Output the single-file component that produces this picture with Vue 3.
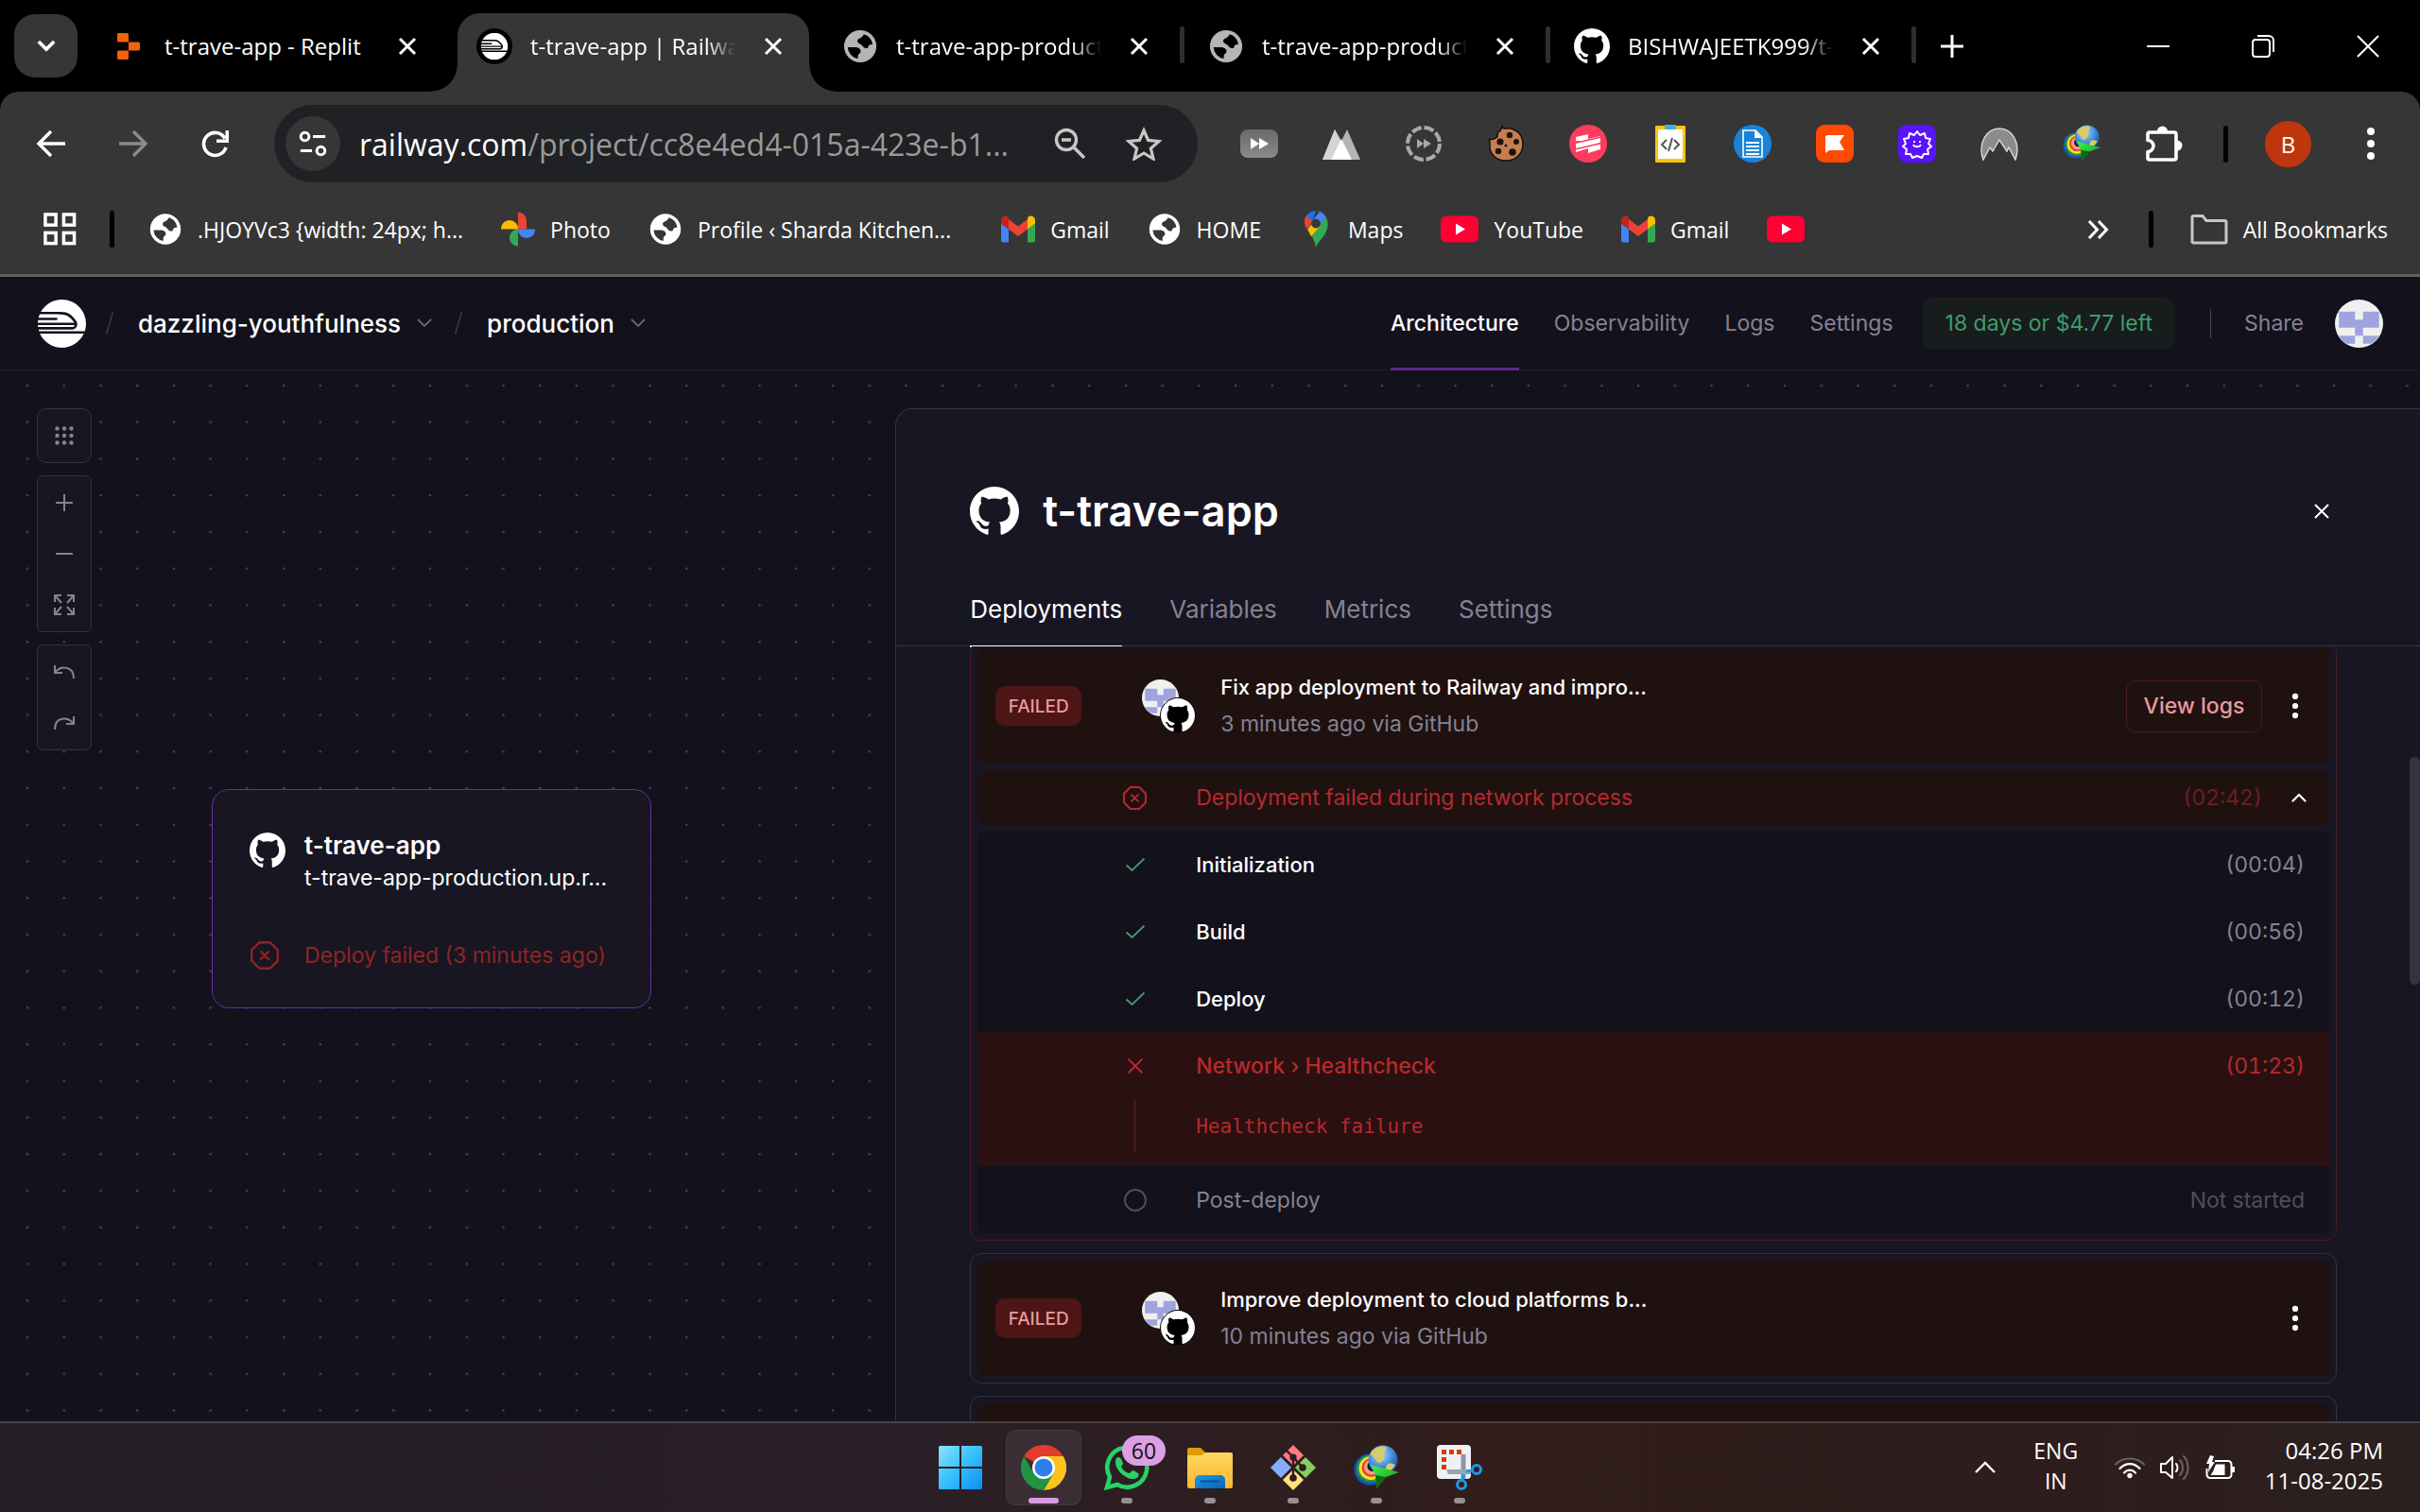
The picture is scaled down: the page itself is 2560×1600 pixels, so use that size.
<script setup>
const tabs = [
  { title: 't-trave-app - Replit', icon: 'replit' },
  { title: 't-trave-app | Railway', icon: 'railway-fav', active: true, fade: true },
  { title: 't-trave-app-product', icon: 'globe', dim: true, divider: true, fade: true },
  { title: 't-trave-app-product', icon: 'globe', dim: true, divider: true, fade: true },
  { title: 'BISHWAJEETK999/t-', icon: 'github', divider: true, fade: true },
]

const extensions = ['ext-speed', 'ext-peak', 'ext-skip', 'ext-cookie', 'ext-stripes', 'ext-code', 'ext-doc', 'ext-flag', 'ext-gear', 'ext-mountain', 'idm', 'puzzle']

const bookmarks = [
  { label: '.HJOYVc3 {width: 24px; h...', icon: 'globe' },
  { label: 'Photo', icon: 'photos' },
  { label: 'Profile ‹ Sharda Kitchen...', icon: 'globe', wide: true },
  { label: 'Gmail', icon: 'gmail' },
  { label: 'HOME', icon: 'globe' },
  { label: 'Maps', icon: 'maps' },
  { label: 'YouTube', icon: 'youtube' },
  { label: 'Gmail', icon: 'gmail' },
  { label: '', icon: 'youtube' },
]

const navLinks = ['Architecture', 'Observability', 'Logs', 'Settings']
const panelTabs = ['Deployments', 'Variables', 'Metrics', 'Settings']

const steps = [
  { name: 'Initialization', time: '(00:04)', state: 'done', icon: 'check' },
  { name: 'Build', time: '(00:56)', state: 'done', icon: 'check' },
  { name: 'Deploy', time: '(00:12)', state: 'done', icon: 'check' },
  { name: 'Network › Healthcheck', time: '(01:23)', state: 'failed', icon: 'cross', detail: 'Healthcheck failure' },
  { name: 'Post-deploy', time: 'Not started', state: 'pending', icon: 'ring' },
]

const apps = [
  { name: 'Start', icon: 'windows' },
  { name: 'Chrome', icon: 'chrome', active: true },
  { name: 'WhatsApp', icon: 'whatsapp', badge: '60', running: true },
  { name: 'File Explorer', icon: 'explorer', running: true },
  { name: 'Git', icon: 'git', running: true },
  { name: 'Download Manager', icon: 'idm', running: true },
  { name: 'Snipping Tool', icon: 'snip', running: true },
]
</script>

<template>
  <div class="screen">
    <svg class="sprite" aria-hidden="true">
      <defs>
        <linearGradient id="g-win" x1="0" y1="0" x2="1" y2="1"><stop offset="0" stop-color="#8fe3ff" /><stop offset=".45" stop-color="#3cc4fb" /><stop offset="1" stop-color="#0a8df5" /></linearGradient>
        <linearGradient id="g-folder" x1="0" y1="0" x2="0" y2="1"><stop offset="0" stop-color="#ffd75e" /><stop offset="1" stop-color="#fbb72c" /></linearGradient>
        <linearGradient id="g-blue" x1="0" y1="0" x2="1" y2="1"><stop offset="0" stop-color="#1f9ae5" /><stop offset="1" stop-color="#0663b5" /></linearGradient>
        <linearGradient id="g-grey" x1="0" y1="0" x2="0" y2="1"><stop offset="0" stop-color="#6a6a6a" /><stop offset="1" stop-color="#8a8a8a" /></linearGradient>
        <radialGradient id="g-earth" cx=".4" cy=".3" r=".8"><stop offset="0" stop-color="#b9e0fb" /><stop offset=".5" stop-color="#4690e0" /><stop offset="1" stop-color="#123a86" /></radialGradient>
        <linearGradient id="g-arrow" x1="0" y1="0" x2="1" y2="1"><stop offset="0" stop-color="#43ee48" /><stop offset="1" stop-color="#0f9a18" /></linearGradient>
      </defs>

      <symbol id="github" viewBox="0 0 16 16"><path fill="currentColor" d="M8 0C3.58 0 0 3.58 0 8c0 3.54 2.29 6.53 5.47 7.59.4.07.55-.17.55-.38 0-.19-.01-.82-.01-1.49-2.01.37-2.53-.49-2.69-.94-.09-.23-.48-.94-.82-1.13-.28-.15-.68-.52-.01-.53.63-.01 1.08.58 1.23.82.72 1.21 1.87.87 2.33.66.07-.52.28-.87.51-1.07-1.78-.2-3.64-.89-3.64-3.95 0-.87.31-1.59.82-2.15-.08-.2-.36-1.02.08-2.12 0 0 .67-.21 2.2.82.64-.18 1.32-.27 2-.27.68 0 1.36.09 2 .27 1.53-1.04 2.2-.82 2.2-.82.44 1.1.16 1.92.08 2.12.51.56.82 1.27.82 2.15 0 3.07-1.87 3.75-3.65 3.95.29.25.54.73.54 1.48 0 1.07-.01 1.93-.01 2.2 0 .21.15.46.55.38A8.013 8.013 0 0 0 16 8c0-4.42-3.58-8-8-8z" /></symbol>
      <symbol id="railway" viewBox="0 0 24 24"><path fill="currentColor" d="M.113 10.27A13.026 13.026 0 000 11.48h18.23c-.064-.125-.15-.237-.235-.347-3.117-4.027-4.793-3.677-7.19-3.78-.8-.034-1.34-.048-4.524-.048-1.704 0-3.555.005-5.358.01-.234.63-.459 1.24-.567 1.737h9.342v1.216H.113v.002zm18.26 2.426H.009c.02.326.05.645.094.961h16.955c.754 0 1.179-.429 1.315-.96zm-17.318 4.28s2.81 6.902 10.93 7.024c4.855 0 9.027-2.883 10.92-7.024H1.056zM11.988 0C7.5 0 3.593 2.466 1.531 6.108l4.75-.005v-.002c3.71 0 3.849.016 4.573.047l.448.016c1.563.052 3.485.22 4.996 1.364.82.621 2.007 1.99 2.712 2.965.654.902.842 1.94.396 2.934-.408.914-1.289 1.458-2.353 1.458H.391s.099.42.249.886h22.748A12.026 12.026 0 0024 12.005C24 5.377 18.621 0 11.988 0z" /></symbol>
      <symbol id="railway-fav" viewBox="0 0 40 40"><circle cx="20" cy="20" r="20" fill="#000" /><use href="#railway" x="5" y="5" width="30" height="30" color="#fff" /></symbol>
      <symbol id="identicon" viewBox="0 0 60 60"><circle cx="30" cy="30" r="30" fill="#f0f0f0" /><path fill="#9fa4de" d="M5 15h20v10h10V15h20v20H35v10h20c-3 5-6 8-10 10H35V45H25v10H15C11 53 8 50 5 45h20V35H5z" /></symbol>
      <symbol id="globe" viewBox="0 0 40 40"><path fill="currentColor" fill-rule="evenodd" d="M20 2a18 18 0 1 0 0 36 18 18 0 0 0 0-36zM24 6.500a14 14 0 0 1 9.800 11.500c-3.800-.3-5 1-5.200 4-2.600.6-4.600 0-6.200-2.400-2-2.800-5.600-2.400-5.600-5.600 0-3.400 4.800-2 7.200-7.500zM6 21h8c4 0 6.500 1.800 6.500 4.500 0 2.500-3 2.500-3 5.500v2.800A14 14 0 0 1 6 21z" /></symbol>
      <symbol id="replit" viewBox="0 0 24 28"><path fill="#f26207" d="M0 1.500A1.500 1.500 0 0 1 1.500 0h9A1.500 1.500 0 0 1 12 1.500v8H1.500A1.500 1.500 0 0 1 0 8zM12 9.500h10.500A1.500 1.500 0 0 1 24 11v6a1.500 1.500 0 0 1-1.500 1.500H12zM0 20a1.500 1.500 0 0 1 1.500-1.500H12v8a1.500 1.500 0 0 1-1.500 1.500h-9A1.500 1.500 0 0 1 0 26.500z" /></symbol>

      <symbol id="x" viewBox="0 0 20 20"><path d="M2 2l16 16M18 2L2 18" stroke="currentColor" stroke-width="3" fill="none" /></symbol>
      <symbol id="x-thin" viewBox="0 0 24 24"><path d="M1 1l22 22M23 1L1 23" stroke="currentColor" stroke-width="2" fill="none" /></symbol>
      <symbol id="x-panel" viewBox="0 0 16 16"><path d="M1 1l14 14M15 1L1 15" stroke="currentColor" stroke-width="2" fill="none" /></symbol>
      <symbol id="restore" viewBox="0 0 24 24"><g fill="none" stroke="currentColor" stroke-width="2"><rect x="1" y="5" width="18" height="18" rx="3" /><path d="M6 1h12a5 5 0 0 1 5 5v12" /></g></symbol>
      <symbol id="minus" viewBox="0 0 24 24"><path d="M0 12h24" stroke="currentColor" stroke-width="2" /></symbol>
      <symbol id="plus" viewBox="0 0 26 26"><path d="M13 1v24M1 13h24" stroke="currentColor" stroke-width="3" /></symbol>
      <symbol id="down" viewBox="0 0 22 14"><path d="M2 2l9 9 9-9" stroke="currentColor" stroke-width="4" fill="none" /></symbol>
      <symbol id="arrow-left" viewBox="0 0 32 30"><path d="M31 15H3M16 2L3 15l13 13" stroke="currentColor" stroke-width="3.400" fill="none" /></symbol>
      <symbol id="arrow-right" viewBox="0 0 32 30"><path d="M1 15h28M16 2l13 13-13 13" stroke="currentColor" stroke-width="3.400" fill="none" /></symbol>
      <symbol id="reload" viewBox="0 0 32 32"><path d="M27 20a12 12 0 1 1-1-9.500" stroke="currentColor" stroke-width="3.600" fill="none" /><path d="M30 2v13H17v-3.500h9.500V2z" fill="currentColor" /></symbol>
      <symbol id="tune" viewBox="0 0 32 32"><g fill="none" stroke="currentColor" stroke-width="3.200"><circle cx="7" cy="8" r="4.600" /><path d="M16 8h14M2 24h13" /><circle cx="25" cy="24" r="4.600" /></g></symbol>
      <symbol id="zoom-out" viewBox="0 0 34 34"><g fill="none" stroke="currentColor" stroke-width="3.400"><circle cx="13" cy="13" r="10.500" /><path d="M20.500 20.500L32 32M8 13h10" /></g></symbol>
      <symbol id="star" viewBox="0 0 38 36"><path d="M19 4l4.600 10.400L35 15.500l-8.600 7.500L29 34l-10-6-10 6 2.600-11L3 15.500l11.400-1.100z" fill="none" stroke="currentColor" stroke-width="3.200" /></symbol>
      <symbol id="dots-v" viewBox="0 0 10 36"><g fill="currentColor"><circle cx="5" cy="5" r="4" /><circle cx="5" cy="18" r="4" /><circle cx="5" cy="31" r="4" /></g></symbol>

      <symbol id="ext-speed" viewBox="0 0 40 40"><rect x="0" y="5" width="40" height="30" rx="8" fill="url(#g-grey)" /><path d="M11 14l9 6-9 6zM20 14l10 6-10 6z" fill="#fff" /></symbol>
      <symbol id="ext-peak" viewBox="0 0 40 40"><path d="M0 37L13 5l7 12 6-12 14 32z" fill="#b5b5b5" /><path d="M0 37L13 5l6 12-9 20z" fill="#d4d4d4" /><path d="M9 37l11-22 11 22z" fill="#fff" /></symbol>
      <symbol id="ext-skip" viewBox="0 0 40 40"><circle cx="20" cy="20" r="17" fill="none" stroke="#a9a9a9" stroke-width="4" stroke-dasharray="10.500 2.850" /><path d="M13 15l7 5-7 5zM20 15l8 5-8 5z" fill="#a9a9a9" /></symbol>
      <symbol id="ext-cookie" viewBox="0 0 40 40"><path d="M16 2c1 4 5 1 9 2 8 2 13 8 13 17 0 10-8 17-18 17C10 38 2 31 3 21c0-3 0-5-1-6 3 1 5 1 7-1 4-1 1-4 3-6 3-1 3-4 4-6z" fill="#c47e50" stroke="#17110d" stroke-width="1.600" /><g fill="#1c130e"><circle cx="24" cy="11" r="3.200" /><circle cx="14" cy="18" r="3.600" /><circle cx="31" cy="18" r="3" /><circle cx="27" cy="29" r="3.800" /><circle cx="12" cy="28" r="3.200" /><circle cx="20" cy="22" r="1.500" /></g></symbol>
      <symbol id="ext-stripes" viewBox="0 0 40 40"><circle cx="20" cy="20" r="20" fill="#ff3b5f" /><path d="M7 13l13-3v5l13-3v6L7 24v-5l6-2H7zM7 20l26-6v5l-6 2h6v5l-13 4v-5L7 29z" fill="#fff" /><path d="M6 19.500l28-6.500M6 26l28-6.500" stroke="#ff3b5f" stroke-width="1.600" /></symbol>
      <symbol id="ext-code" viewBox="0 0 40 40"><rect x="4" y="1" width="32" height="39" rx="1" fill="#fbc60a" /><rect x="7" y="5" width="26" height="31" fill="#fff" /><rect x="14" y="0" width="12" height="5" fill="#3bb1e8" /><path d="M16 16l-5 5 5 5M24 16l5 5-5 5M22 14l-4 14" stroke="#555" stroke-width="2" fill="none" /></symbol>
      <symbol id="ext-doc" viewBox="0 0 40 40"><circle cx="20" cy="20" r="20" fill="#1a83d8" /><path d="M10 6h13l7 7v21H10z" fill="#1a83d8" stroke="#fff" stroke-width="1.600" /><path d="M22 6v8h8zM13 18h14v2H13zM13 22h14v2H13zM13 26h14v2H13zM13 30h14v2H13z" fill="#fff" /></symbol>
      <symbol id="ext-flag" viewBox="0 0 40 40"><rect width="40" height="40" rx="9" fill="#ff4a00" /><path d="M12 11h18l-5 7 5 9H14l-4 3V13a2 2 0 0 1 2-2z" fill="#fff" /></symbol>
      <symbol id="ext-gear" viewBox="0 0 40 40"><rect width="40" height="40" rx="9" fill="#5a12ff" /><path d="M20 7l3 4 5-2 1 5 5 1-2 5 3 3-4 3 1 5-5 0-2 4-5-2-5 2-2-4-5 0 1-5-4-3 3-3-2-5 5-1 1-5 5 2z" fill="none" stroke="#fff" stroke-width="2" stroke-linejoin="round" /><path d="M17 17v2M23 17v2M16 21c1 3 7 3 8 0" stroke="#fff" stroke-width="1.800" fill="none" /></symbol>
      <symbol id="ext-mountain" viewBox="0 0 40 40"><path d="M3 37C-3 20 6 4 20 4s23 16 17 33l-7-13-2 4-8-12-7 12-3-4z" fill="#8b8b8b" stroke="#d8d8d8" stroke-width="1.400" /></symbol>
      <symbol id="puzzle" viewBox="0 0 40 40"><path d="M5 8h26a2 2 0 0 1 2 2v25a2 2 0 0 1-2 2H5a2 2 0 0 1-2-2v-6.500a6 6 0 0 0 0-12V10a2 2 0 0 1 2-2z" fill="none" stroke="#fff" stroke-width="3.600" stroke-linejoin="round" /><path d="M13 7a5.500 5.500 0 0 1 11 0zM34 16.500a5.500 5.500 0 0 1 0 11z" fill="#fff" /></symbol>
      <symbol id="idm" viewBox="0 0 48 48"><circle cx="17" cy="26" r="16.500" fill="#1a4fc4" /><circle cx="17.500" cy="25" r="14.500" fill="#1f9a34" /><circle cx="18" cy="24.500" r="12.500" fill="#f7e22c" /><circle cx="18.500" cy="24" r="10" fill="#e8432d" /><circle cx="19" cy="23.500" r="8" fill="#f7a08e" /><circle cx="20" cy="22.500" r="5.500" fill="#1d1216" /><circle cx="31" cy="16" r="15.500" fill="url(#g-earth)" /><path d="M19 7c4-5 10-6 15-5 2 3-2 5-2 8 2 4-1 8-5 9-3 0-3-4-6-6-2-2-4-3-2-6zM36 20c3-1 6 0 8 1-2 4-5 7-9 9-1-4-2-7 1-10z" fill="#d6cc6c" /><path d="M18 21l30 8-14 5-10 12-1-14z" fill="url(#g-arrow)" /><path d="M23 32l11 2-10 12z" fill="#0a6b12" /></symbol>

      <symbol id="apps" viewBox="0 0 36 36"><g fill="none" stroke="currentColor" stroke-width="3.600"><rect x="2" y="2" width="11.500" height="11.500" /><rect x="22" y="2" width="11.500" height="11.500" /><rect x="2" y="22" width="11.500" height="11.500" /><rect x="22" y="22" width="11.500" height="11.500" /></g></symbol>
      <symbol id="photos" viewBox="0 0 36 36"><path fill="#ea4335" d="M18 0a9 9 0 0 1 9 9.500V18h-9z" /><path fill="#4285f4" d="M36 18a9 9 0 0 1-9 9.500h0A9 9 0 0 1 18 18z" /><path fill="#34a853" d="M18 36a9 9 0 0 1-9-9.500A9 9 0 0 1 18 18z" /><path fill="#fbbc04" d="M0 18a9 9 0 0 1 9-9.500A9 9 0 0 1 18 18z" /></symbol>
      <symbol id="gmail" viewBox="0 0 36 28"><path fill="#4285f4" d="M2.500 28H8V14L0 8v17.500A2.500 2.500 0 0 0 2.500 28z" /><path fill="#34a853" d="M28 28h5.500a2.500 2.500 0 0 0 2.500-2.500V8l-8 6z" /><path fill="#fbbc04" d="M28 3.500V14l8-6V4.500C36 .6 31.600-1.200 28.600 1z" /><path fill="#ea4335" d="M8 14V3.500l10 7.500 10-7.500V14l-10 7.500z" /><path fill="#c5221f" d="M0 4.500V8l8 6V3.500L7.400 1C4.400-1.200 0 .6 0 4.500z" /></symbol>
      <symbol id="maps" viewBox="0 0 28 40"><path fill="#34a853" d="M14 40c2-8 13-13 13-26 0-3-1-5-2-7L9 26c2 4 4 8 5 14z" /><path fill="#fbbc04" d="M5 20l7-9 7 5-10 12c-1-2-3-5-4-8z" /><path fill="#ea4335" d="M4 5l7 6-7 9C2 16 0 10 4 5z" /><path fill="#1a73e8" d="M4 5C7 1 12 0 14 0l-4 12z" /><path fill="#4285f4" d="M14 0c5 0 9 3 11 7l-8 10-7-6L18 1z" /><circle cx="14" cy="14" r="5" fill="#363636" /></symbol>
      <symbol id="youtube" viewBox="0 0 40 28"><rect width="40" height="28" rx="6" fill="#ff0033" /><path d="M16 8l10 6-10 6z" fill="#fff" /></symbol>
      <symbol id="more" viewBox="0 0 24 20"><path d="M2 1l8.500 9L2 19M12 1l8.500 9-8.500 9" fill="none" stroke="currentColor" stroke-width="3" /></symbol>
      <symbol id="folder" viewBox="0 0 40 32"><path d="M2 29V3a1.500 1.500 0 0 1 1.500-1.500H13l4 5h19.500A1.500 1.500 0 0 1 38 8v20.500a1.500 1.500 0 0 1-1.500 1.500h-33A1.500 1.500 0 0 1 2 29z" fill="none" stroke="#c7c7c7" stroke-width="3" /></symbol>

      <symbol id="chev" viewBox="0 0 16 10"><path d="M1 1l7 7 7-7" fill="none" stroke="currentColor" stroke-width="1.800" /></symbol>
      <symbol id="chev-up" viewBox="0 0 16 10"><path d="M1.500 8.500L8 2l6.500 6.500" fill="none" stroke="currentColor" stroke-width="2.200" stroke-linecap="round" /></symbol>
      <symbol id="slash" viewBox="0 0 8 24"><path d="M7.500 0L.5 24" stroke="currentColor" stroke-width="1.600" /></symbol>
      <symbol id="grid9" viewBox="0 0 20 20"><g fill="currentColor"><circle cx="2.500" cy="2.500" r="2.200" /><circle cx="10" cy="2.500" r="2.200" /><circle cx="17.500" cy="2.500" r="2.200" /><circle cx="2.500" cy="10" r="2.200" /><circle cx="10" cy="10" r="2.200" /><circle cx="17.500" cy="10" r="2.200" /><circle cx="2.500" cy="17.500" r="2.200" /><circle cx="10" cy="17.500" r="2.200" /><circle cx="17.500" cy="17.500" r="2.200" /></g></symbol>
      <symbol id="zin" viewBox="0 0 22 22"><path d="M11 2v18M2 11h18" stroke="currentColor" stroke-width="2" /></symbol>
      <symbol id="zout" viewBox="0 0 22 22"><path d="M2 11h18" stroke="currentColor" stroke-width="2" /></symbol>
      <symbol id="expand" viewBox="0 0 22 22"><path d="M1 8V1h7M14 1h7v7M21 14v7h-7M8 21H1v-7M1 1l7 8M21 1l-7 8M21 21l-7-8M1 21l7-8" fill="none" stroke="currentColor" stroke-width="2" /></symbol>
      <symbol id="undo" viewBox="0 0 22 14"><path d="M1 0v8h8M1.500 7.500C7 0 21 0 21 14" fill="none" stroke="currentColor" stroke-width="2" /></symbol>
      <symbol id="redo" viewBox="0 0 22 14"><path d="M21 0v8h-8M20.500 7.500C15 0 1 0 1 14" fill="none" stroke="currentColor" stroke-width="2" /></symbol>
      <symbol id="octagon" viewBox="0 0 24 24"><path d="M7.500 1h9L23 7.500v9L16.500 23h-9L1 16.500v-9zM8.800 8.800l6.400 6.400M15.200 8.800l-6.400 6.400" fill="none" stroke="currentColor" stroke-width="1.900" stroke-linejoin="round" stroke-linecap="round" /></symbol>
      <symbol id="check" viewBox="0 0 24 24"><path d="M2.500 12.500l6 5.500L21.500 5.500" fill="none" stroke="currentColor" stroke-width="1.900" /></symbol>
      <symbol id="cross" viewBox="0 0 24 24"><path d="M4.500 4.500l15 15M19.500 4.500l-15 15" fill="none" stroke="currentColor" stroke-width="1.800" /></symbol>
      <symbol id="ring" viewBox="0 0 24 24"><circle cx="12" cy="12" r="11" fill="none" stroke="#504e5a" stroke-width="2" /></symbol>

      <symbol id="windows" viewBox="0 0 48 48"><path d="M1 2.500A1.500 1.500 0 0 1 2.500 1H23v22H1zM25 1h20.500A1.500 1.500 0 0 1 47 2.500V23H25zM1 25h22v22H2.500A1.500 1.500 0 0 1 1 45.500zM25 25h22v20.500a1.500 1.500 0 0 1-1.500 1.500H25z" fill="url(#g-win)" /></symbol>
      <symbol id="chrome" viewBox="0 0 48 48"><path fill="#e33b2e" d="M24 24L3.200 12A24 24 0 0 1 44.800 12z" /><path fill="#fcc31e" d="M24 12h20.800A24 24 0 0 1 24 48l10.400-18z" /><path fill="#229342" d="M3.200 12A24 24 0 0 0 24 48l10.400-18L13.600 30z" /><circle cx="24" cy="24" r="12" fill="#fff" /><circle cx="24" cy="24" r="9.500" fill="#2f7de9" /></symbol>
      <symbol id="whatsapp" viewBox="0 0 48 48"><path d="M3 45l3-11A21 21 0 1 1 14 42z" fill="none" stroke="#25d366" stroke-width="4.600" /><path d="M13 14c2-2 4-1 5 1l2 4c0 2-2 3-2 4 2 4 5 6 8 7 2 0 3-3 5-3l5 3c2 2-1 6-4 6-9 1-20-9-20-18 0-2 0-3 1-4z" fill="#25d366" /></symbol>
      <symbol id="explorer" viewBox="0 0 48 48"><path d="M0 5a2 2 0 0 1 2-2h12l6 6v8H0z" fill="#dd9d07" /><path d="M0 13a2 2 0 0 1 2-2h13l4-3h27a2 2 0 0 1 2 2v34a2 2 0 0 1-2 2H2a2 2 0 0 1-2-2z" fill="url(#g-folder)" /><path d="M8 37a5 5 0 0 1 5-5h22a5 5 0 0 1 5 5v9H8z" fill="url(#g-blue)" /><path d="M14 38.500h20" stroke="#0b4f93" stroke-width="2" /></symbol>
      <symbol id="git" viewBox="0 0 48 48"><path d="M24 0l11 11-11 11L13 11z" fill="#ff7b7f" /><path d="M37 13l11 11-11 11-11-11z" fill="#84cf5c" /><path d="M11 13l11 11-11 11L0 24z" fill="#84aefc" /><path d="M24 26l11 11-11 11-11-11z" fill="#ffe07a" /><path d="M17 6l7 7v24M24 13l10 11" stroke="#2c1d22" stroke-width="2.400" fill="none" /><g fill="#2c1d22"><circle cx="24" cy="13" r="3.600" /><circle cx="34" cy="24" r="3.800" /><circle cx="24" cy="35" r="3.800" /></g></symbol>
      <symbol id="snip" viewBox="0 0 48 48"><rect width="36" height="36" rx="4" fill="#eef1f4" /><path fill="#d83b01" d="M5 5h5v5H5zM13 5h5v5h-5zM21 5h5v5h-5zM5 13h5v5H5zM5 21h5v5H5z" /><path d="M25.500 10h5v26h-5z" fill="#8b97a5" /><path d="M10 26h26v5H12z" fill="#9aa5b1" /><g fill="none" stroke="#1d97e4" stroke-width="3"><circle cx="42" cy="26" r="4.500" /><circle cx="26" cy="42" r="4.500" /><path d="M31 28l7-1M28 31l-1 7" /></g></symbol>

      <symbol id="wifi" viewBox="0 0 32 24"><g fill="none" stroke="#fff" stroke-width="2.200" stroke-linecap="round"><path d="M1 8.500C9 .5 23 .5 31 8.500" opacity=".3" /><path d="M5.500 13c6-6.500 15-6.500 21 0M10 17.500c3.500-3.800 8.500-3.800 12 0" /></g><circle cx="16" cy="20.500" r="2.700" fill="#fff" /></symbol>
      <symbol id="volume" viewBox="0 0 32 28"><g fill="none" stroke="#fff" stroke-width="2" stroke-linejoin="round" stroke-linecap="round"><path d="M1 10h5l7-7v22l-7-6H1z" /><path d="M17 10c2 2 2 6 0 8" /><path d="M21 6c4 4 4 12 0 16M25 2c6 6 6 18 0 24" opacity=".3" /></g></symbol>
      <symbol id="battery" viewBox="0 0 32 26"><path d="M10 6h14a3.500 3.500 0 0 1 3.500 3.500v11A3.500 3.500 0 0 1 24 24H5a3.500 3.500 0 0 1-3.500-3.500V14" fill="none" stroke="#fff" stroke-width="2" /><path d="M28 12h3v6h-3zM11 9.500h9.500v11.500h-15L8 17z" fill="#fff" /><path d="M5 0L1 9h3l-1 9 7-11H7l2-6z" fill="#fff" /></symbol>
    </svg>

    <header class="browser">
      <div class="tabstrip">
        <button class="tab-search" aria-label="Search tabs"><svg width="20" height="13"><use href="#down" /></svg></button>
        <div class="tabs">
          <div v-for="(t, i) in tabs" :key="i" class="tab" :class="{ active: t.active, divider: t.divider }">
            <span class="fav" :class="{ dim: t.dim }"><svg :width="t.icon === 'replit' ? 24 : 38" :height="t.icon === 'replit' ? 28 : 38"><use :href="'#' + t.icon" /></svg></span>
            <span class="tab-title" :class="{ fade: t.fade }">{{ t.title }}</span>
            <button class="tab-close" aria-label="Close tab"><svg width="20" height="20"><use href="#x" /></svg></button>
          </div>
        </div>
        <button class="new-tab" aria-label="New tab"><svg width="26" height="26"><use href="#plus" /></svg></button>
        <div class="win-controls">
          <button aria-label="Minimize"><svg width="24" height="24"><use href="#minus" /></svg></button>
          <button aria-label="Restore"><svg width="24" height="24"><use href="#restore" /></svg></button>
          <button aria-label="Close"><svg width="24" height="24"><use href="#x-thin" /></svg></button>
        </div>
      </div>

      <div class="chrome-body">
        <div class="toolbar">
          <button class="slot" aria-label="Back"><svg width="32" height="30"><use href="#arrow-left" /></svg></button>
          <button class="slot off" aria-label="Forward"><svg width="32" height="30"><use href="#arrow-right" /></svg></button>
          <button class="slot" aria-label="Reload"><svg width="32" height="32"><use href="#reload" /></svg></button>
          <div class="omnibox">
            <button class="chip" aria-label="Site information"><svg width="30" height="30"><use href="#tune" /></svg></button>
            <div class="url" role="textbox" aria-label="Address">railway.com<span>/project/cc8e4ed4-015a-423e-b1...</span></div>
            <button class="omni-btn" aria-label="Zoom"><svg width="34" height="34"><use href="#zoom-out" /></svg></button>
            <button class="omni-btn" aria-label="Bookmark"><svg width="38" height="36"><use href="#star" /></svg></button>
          </div>
          <div class="exts">
            <button v-for="e in extensions" :key="e" class="slot" :aria-label="e"><svg width="40" height="40"><use :href="'#' + e" /></svg></button>
          </div>
          <span class="bar"></span>
          <button class="slot" aria-label="Profile"><span class="profile">B</span></button>
          <button class="slot" aria-label="Menu"><svg width="10" height="36"><use href="#dots-v" /></svg></button>
        </div>

        <nav class="bookmarks" aria-label="Bookmarks">
          <button class="plain" aria-label="Apps"><svg width="35" height="35"><use href="#apps" /></svg></button>
          <span class="bar first"></span>
          <div class="marks">
            <a v-for="(b, i) in bookmarks" :key="i" href="#" class="mark" :class="{ wide: b.wide }" :aria-label="b.label || 'YouTube'">
              <svg class="mark-icon" :width="b.icon === 'youtube' ? 40 : 36" height="39"><use :href="'#' + b.icon" /></svg><span v-if="b.label">{{ b.label }}</span>
            </a>
          </div>
          <button class="plain" aria-label="More bookmarks"><svg width="24" height="20"><use href="#more" /></svg></button>
          <span class="bar last"></span>
          <a href="#" class="mark"><svg width="40" height="32"><use href="#folder" /></svg><span>All Bookmarks</span></a>
        </nav>
      </div>
    </header>

    <main class="page">
      <header class="topbar">
        <a href="#" class="logo" aria-label="Railway"><svg width="51" height="51"><use href="#railway" /></svg></a>
        <svg class="slash" width="8" height="24"><use href="#slash" /></svg>
        <button class="crumb">dazzling-youthfulness <svg width="16" height="10"><use href="#chev" /></svg></button>
        <svg class="slash second" width="8" height="24"><use href="#slash" /></svg>
        <button class="crumb">production <svg width="16" height="10"><use href="#chev" /></svg></button>
        <nav class="nav">
          <a v-for="(n, i) in navLinks" :key="n" href="#" :class="{ current: i === 0 }">{{ n }}</a>
        </nav>
        <a href="#" class="plan">18 days or $4.77 left</a>
        <span class="rule"></span>
        <button class="share">Share</button>
        <svg class="avatar" width="51" height="51"><use href="#identicon" /></svg>
      </header>

      <div class="body">
        <svg class="dots" width="100%" height="100%" aria-hidden="true">
          <defs><pattern id="dotgrid" x="10" y="-4" width="38.730" height="38.730" patternUnits="userSpaceOnUse"><circle cx="19" cy="20" r="1.200" fill="#4a4855" /></pattern></defs>
          <rect width="100%" height="100%" fill="url(#dotgrid)" />
        </svg>

        <section class="canvas">
          <div class="tools">
            <div class="tool-group single"><button aria-label="Grid"><svg width="20" height="20"><use href="#grid9" /></svg></button></div>
            <div class="tool-group">
              <button aria-label="Zoom in"><svg width="22" height="22"><use href="#zin" /></svg></button>
              <button aria-label="Zoom out"><svg width="22" height="22"><use href="#zout" /></svg></button>
              <button aria-label="Fit view"><svg width="22" height="22"><use href="#expand" /></svg></button>
            </div>
            <div class="tool-group">
              <button aria-label="Undo"><svg width="22" height="14"><use href="#undo" /></svg></button>
              <button aria-label="Redo"><svg width="22" height="14"><use href="#redo" /></svg></button>
            </div>
          </div>
          <article class="node">
            <div class="node-head">
              <svg width="38" height="38"><use href="#github" /></svg>
              <div>
                <h3>t-trave-app</h3>
                <p>t-trave-app-production.up.r...</p>
              </div>
            </div>
            <div class="node-status"><svg width="30" height="30"><use href="#octagon" /></svg>Deploy failed (3 minutes ago)</div>
          </article>
        </section>

        <section class="panel">
          <div class="panel-head">
            <svg width="52" height="52"><use href="#github" /></svg>
            <h2>t-trave-app</h2>
            <button class="panel-close" aria-label="Close"><svg width="16" height="16"><use href="#x-panel" /></svg></button>
          </div>
          <nav class="panel-tabs">
            <a v-for="(t, i) in panelTabs" :key="t" href="#" :class="{ current: i === 0 }">{{ t }}</a>
          </nav>
          <div class="list">
            <article class="deploy latest">
              <div class="row">
                <span class="badge">FAILED</span>
                <span class="who"><svg width="39" height="39"><use href="#identicon" /></svg><span class="via"><svg width="36" height="36"><use href="#github" /></svg></span></span>
                <div class="what"><h4>Fix app deployment to Railway and impro...</h4><p>3 minutes ago via GitHub</p></div>
                <button class="view-logs">View logs</button>
                <button class="kebab" aria-label="Options"><svg width="8" height="28"><use href="#dots-v" /></svg></button>
              </div>
              <button class="summary">
                <svg width="25" height="25"><use href="#octagon" /></svg>
                <span class="name">Deployment failed during network process</span>
                <span class="time">(02:42)</span>
                <svg class="toggle" width="16" height="10"><use href="#chev-up" /></svg>
              </button>
              <ul class="steps">
                <li v-for="s in steps" :key="s.name" :class="s.state">
                  <div class="step">
                    <svg width="24" height="24"><use :href="'#' + s.icon" /></svg>
                    <span class="name">{{ s.name }}</span>
                    <span class="time">{{ s.time }}</span>
                  </div>
                  <div v-if="s.detail" class="detail"><code>{{ s.detail }}</code></div>
                </li>
              </ul>
            </article>
            <article class="deploy">
              <div class="row">
                <span class="badge">FAILED</span>
                <span class="who"><svg width="39" height="39"><use href="#identicon" /></svg><span class="via"><svg width="36" height="36"><use href="#github" /></svg></span></span>
                <div class="what"><h4>Improve deployment to cloud platforms b...</h4><p>10 minutes ago via GitHub</p></div>
                <button class="kebab" aria-label="Options"><svg width="8" height="28"><use href="#dots-v" /></svg></button>
              </div>
            </article>
            <article class="deploy"><div class="row"></div></article>
          </div>
          <span class="thumb"></span>
        </section>
      </div>
    </main>

    <footer class="taskbar">
      <div class="apps">
        <button v-for="a in apps" :key="a.name" class="app" :class="{ active: a.active, running: a.running }" :aria-label="a.name">
          <svg width="48" height="48"><use :href="'#' + a.icon" /></svg>
          <span v-if="a.badge" class="count">{{ a.badge }}</span>
        </button>
      </div>
      <div class="tray">
        <svg class="tray-up" width="24" height="14" viewBox="0 0 24 14"><path d="M2 12L12 2l10 10" fill="none" stroke="#fff" stroke-width="2.400" /></svg>
        <div class="lang">ENG<br />IN</div>
        <div class="status">
          <svg width="32" height="24"><use href="#wifi" /></svg>
          <svg width="32" height="28"><use href="#volume" /></svg>
          <svg width="32" height="26"><use href="#battery" /></svg>
        </div>
        <div class="clock">04:26 PM<br />11-08-2025</div>
      </div>
    </footer>
  </div>
</template>

<style>
html,
body {
  margin: 0;
  background: #13111c;
}
</style>

<style scoped>
.screen {
  display: flex;
  flex-direction: column;
  height: 100vh;
  overflow: hidden;
  font-family: Inter, "Liberation Sans", sans-serif;
  font-size: 23px;
  color: #fff;
}
.sprite { position: absolute; width: 0; height: 0; }
button {
  display: flex;
  align-items: center;
  justify-content: center;
  padding: 0;
  border: 0;
  background: none;
  color: inherit;
  font: inherit;
}
a { color: inherit; text-decoration: none; }
h2, h3, h4, p, ul { margin: 0; padding: 0; }
svg { flex: none; display: block; }

/* Browser window */
.browser { flex: none; background: #000; font-family: "Open Sans", "Noto Sans", sans-serif; font-size: 23px; }
.tabstrip { display: flex; height: 97px; }
.tab-search { flex: none; width: 67px; height: 67px; margin: 15px; border-radius: 22px; background: #363636; }
.tabs { display: flex; gap: 15px; padding-top: 14px; }
.tab { position: relative; display: flex; align-items: center; box-sizing: border-box; width: 372px; height: 83px; padding: 0 16px 14px 19px; }
.tab.active { background: #363636; border-radius: 24px 24px 0 0; }
.tab.active::before,
.tab.active::after { content: ""; position: absolute; bottom: 0; width: 28px; height: 28px; }
.tab.active::before { right: 100%; background: radial-gradient(circle at 0 0, transparent 27px, #363636 28px); }
.tab.active::after { left: 100%; background: radial-gradient(circle at 100% 0, transparent 27px, #363636 28px); }
.tab.divider::after { content: ""; position: absolute; top: 14px; right: -10px; width: 5px; height: 39px; border-radius: 3px; background: #2f2f2f; }
.fav { flex: none; display: flex; justify-content: center; width: 40px; margin-right: 18px; }
.fav.dim { color: #b5b5b5; }
.tab-title { flex: 1; min-width: 0; white-space: nowrap; font-size: 24px; }
.tab-title.fade { mask-image: linear-gradient(to right, #000 86%, transparent); }
.tab-close { flex: none; width: 44px; margin-left: 18px; }
.new-tab { width: 67px; height: 67px; margin: 15px 0 0 14px; }
.win-controls { display: flex; margin-left: auto; }
.win-controls button { width: 111px; }
.chrome-body { background: #363636; border-radius: 20px 20px 0 0; border-bottom: 3px solid #616161; }
.toolbar { display: flex; align-items: center; height: 110px; padding: 0 9px 0 10px; }
.slot { flex: none; width: 87px; height: 87px; }
.off { color: #8a8a8a; }
.omnibox { flex: 1; display: flex; align-items: center; min-width: 0; height: 82px; margin: 0 21px 0 19px; padding: 0 18px 0 12px; border-radius: 41px; box-sizing: border-box; background: #202124; }
.chip { flex: none; width: 58px; height: 58px; border-radius: 50%; background: #363636; }
.url { flex: 1; min-width: 0; margin-left: 20px; white-space: nowrap; font-size: 32px; }
.url span { color: #9a9a9a; }
.omni-btn { flex: none; width: 78px; height: 78px; color: #c7c7c7; }
.exts { display: flex; }
.bar { flex: none; width: 5px; height: 39px; margin: 0 20px; border-radius: 3px; background: #000; }
.profile { display: flex; align-items: center; justify-content: center; width: 49px; height: 49px; border-radius: 50%; background: #bf360c; font-size: 24px; }
.bookmarks { display: flex; align-items: center; height: 71px; padding: 0 34px 12px 46px; }
.bar.first { margin: 0 36px 0 35px; }
.bar.last { margin: 0 39px 0 41px; }
.marks { flex: 1; display: flex; gap: 40px; }
.mark { display: flex; align-items: center; gap: 16px; white-space: nowrap; }
.mark.wide { margin-right: 13px; }

/* Railway header */
.page { flex: 1; display: flex; flex-direction: column; min-height: 0; background: #13111c; }
.topbar { flex: none; display: flex; align-items: center; height: 98px; padding: 0 39px 0 40px; border-bottom: 1px solid #211f2b; }
.slash { margin: 0 26px 0 21px; color: #393744; }
.slash.second { margin-left: 24px; }
.crumb { gap: 17px; font-size: 26px; font-weight: 500; }
.crumb svg { color: #6a6874; }
.nav { display: flex; gap: 37px; height: 100%; margin-left: auto; color: #858292; }
.nav a { display: flex; align-items: center; padding-top: 2px; border-bottom: 3px solid transparent; margin-bottom: -1px; }
.nav .current { color: #fff; font-weight: 500; border-color: #5b2a86; }
.plan { display: flex; align-items: center; height: 55px; margin-left: 31px; padding: 0 24px; border-radius: 10px; background: #171d1c; color: #429a6c; }
.rule { width: 1px; height: 31px; margin: 0 35px 0 37px; background: #4a4450; }
.share { color: #858292; }
.avatar { margin-left: 33px; }

/* Canvas */
.body { position: relative; flex: 1; display: flex; min-height: 0; }
.dots { position: absolute; inset: 0; }
.canvas { position: relative; flex: 1; padding: 40px 0 0 39px; }
.tools { display: flex; flex-direction: column; gap: 13px; width: 58px; color: #858292; }
.tool-group { display: flex; flex-direction: column; padding: 1px 0; border: 1px solid #33323e; border-radius: 6px; background: #181622; }
.tool-group.single { border-radius: 10px; }
.tool-group button { height: 54px; }
.node { position: absolute; left: 224px; top: 443px; box-sizing: border-box; width: 465px; height: 232px; padding: 43px 38px 0 39px; border: 1px solid #68309c; border-radius: 18px; background: #181622; }
.node-head { display: flex; gap: 20px; }
.node-head svg { margin-top: 2px; }
.node h3 { font-size: 26px; line-height: 32px; font-weight: 600; }
.node p { font-size: 23px; line-height: 36px; white-space: nowrap; }
.node-status { display: flex; align-items: center; gap: 27px; margin-top: 48px; padding-left: 1px; line-height: 32px; color: #8f2424; white-space: nowrap; }

/* Service panel */
.panel { position: relative; flex: 0 0 63%; box-sizing: border-box; display: flex; flex-direction: column; min-width: 0; margin-top: 40px; border: 1px solid #33323e; border-width: 1px 0 0 1px; border-radius: 18px 0 0 0; background: #181622; }
.panel-head { flex: none; display: flex; align-items: center; height: 52px; padding: 82px 96px 0 78px; }
h2 { margin-left: 25px; font-size: 45px; line-height: 52px; font-weight: 600; }
.panel-close { margin-left: auto; }
.panel-tabs { flex: none; display: flex; gap: 50px; margin-top: 60px; padding-left: 78px; border-bottom: 1px solid #33323e; font-size: 26px; line-height: 36px; color: #858292; }
.panel-tabs a { padding-bottom: 20px; }
.panel-tabs .current { color: #fff; border-bottom: 2px solid #fff; margin-bottom: -2px; }
.list { flex: 1; min-height: 0; overflow: hidden; padding: 0 88px 0 78px; }
.deploy { margin-bottom: 13px; padding: 7px; border: 1px solid #33323e; border-radius: 12px; background: #181622; }
.latest { margin-top: -6px; border-color: #4a1a1e; }
.row { display: flex; align-items: center; height: 122px; padding: 0 16px 0 19px; border-radius: 8px; background: #201111; }
.badge { display: flex; align-items: center; justify-content: center; width: 91px; height: 42px; border-radius: 10px; background: #4d1515; color: #e79a9c; font-size: 19px; font-weight: 500; }
.who { position: relative; width: 57px; height: 57px; margin: 0 26px 0 64px; }
.via { position: absolute; right: 0; bottom: 0; border: 1px solid #13111c; border-radius: 50%; background: #000; color: #fff; }
.what { flex: 1; line-height: 39px; white-space: nowrap; }
h4 { font-size: 22px; font-weight: 500; }
.what p { color: #858292; }
.view-logs { width: 144px; height: 55px; border: 1px solid #4a1a1e; border-radius: 10px; color: #e79a9c; font-weight: 500; }
.kebab { width: 40px; margin-left: 15px; }
.summary { width: 100%; height: 58px; margin: 7px 0 6px; padding: 0 24px 0 154px; border-radius: 8px; background: #201111; color: #b52a2c; text-align: left; }
.name { flex: 1; margin-left: 52px; white-space: nowrap; }
.time { font-variant-numeric: tabular-nums; color: #858292; }
.summary .time { color: #6f1f1f; }
.toggle { margin-left: 31px; color: #fff; }
.steps { list-style: none; border-radius: 8px; background: #13111c; overflow: hidden; }
.step { display: flex; align-items: center; height: 71px; padding: 0 26px 0 155px; }
.done .name { font-size: 22px; font-weight: 500; }
.done svg { color: #429a6c; }
.failed { background: #2b1011; color: #b52a2c; }
.failed .name { font-weight: 500; }
.failed .time { color: #b52a2c; }
.pending { color: #858292; }
.pending .time { color: #504e5a; }
.detail { height: 71px; margin-left: 166px; }
.detail code { display: flex; align-items: center; height: 57px; padding-left: 64px; border-left: 1px solid #5a2126; font: 21px "DejaVu Sans Mono", monospace; }
.thumb { position: absolute; right: 0; top: 368px; width: 11px; height: 241px; border-radius: 6px; background: #353341; }

/* Taskbar */
.taskbar { flex: none; display: grid; grid-template-columns: 1fr auto 1fr; align-items: center; height: 94px; border-top: 2px solid #4b4143; background: linear-gradient(to right, #241e26, #2a1f26 38%, #301d1c 60%, #2e1d1c 85%, #2b2020); font-family: "Open Sans", "Noto Sans", sans-serif; font-size: 23px; }
.apps { grid-column: 2; display: flex; gap: 8px; }
.app { position: relative; box-sizing: border-box; width: 80px; height: 80px; border-radius: 10px; border: 1px solid transparent; }
.app.active { background: #3a2d33; border-color: #463a40; }
.app.active::after,
.app.running::after { content: ""; position: absolute; left: 50%; bottom: 1px; width: 12px; height: 6px; margin-left: -6px; border-radius: 3px; background: #9a9093; }
.app.active::after { width: 32px; margin-left: -16px; background: #d79ce2; }
.count { position: absolute; left: 34px; top: 5px; width: 46px; height: 32px; border-radius: 16px; background: #dc9fe4; color: #111; line-height: 32px; text-align: center; }
.tray { display: flex; align-items: center; justify-content: flex-end; padding-right: 39px; line-height: 32px; }
.lang { width: 66px; margin-left: 30px; padding-bottom: 4px; text-align: center; }
.status { display: flex; align-items: center; gap: 16px; margin: 0 31px 0 29px; }
.clock { padding-bottom: 4px; font-size: 24px; text-align: right; }
</style>
